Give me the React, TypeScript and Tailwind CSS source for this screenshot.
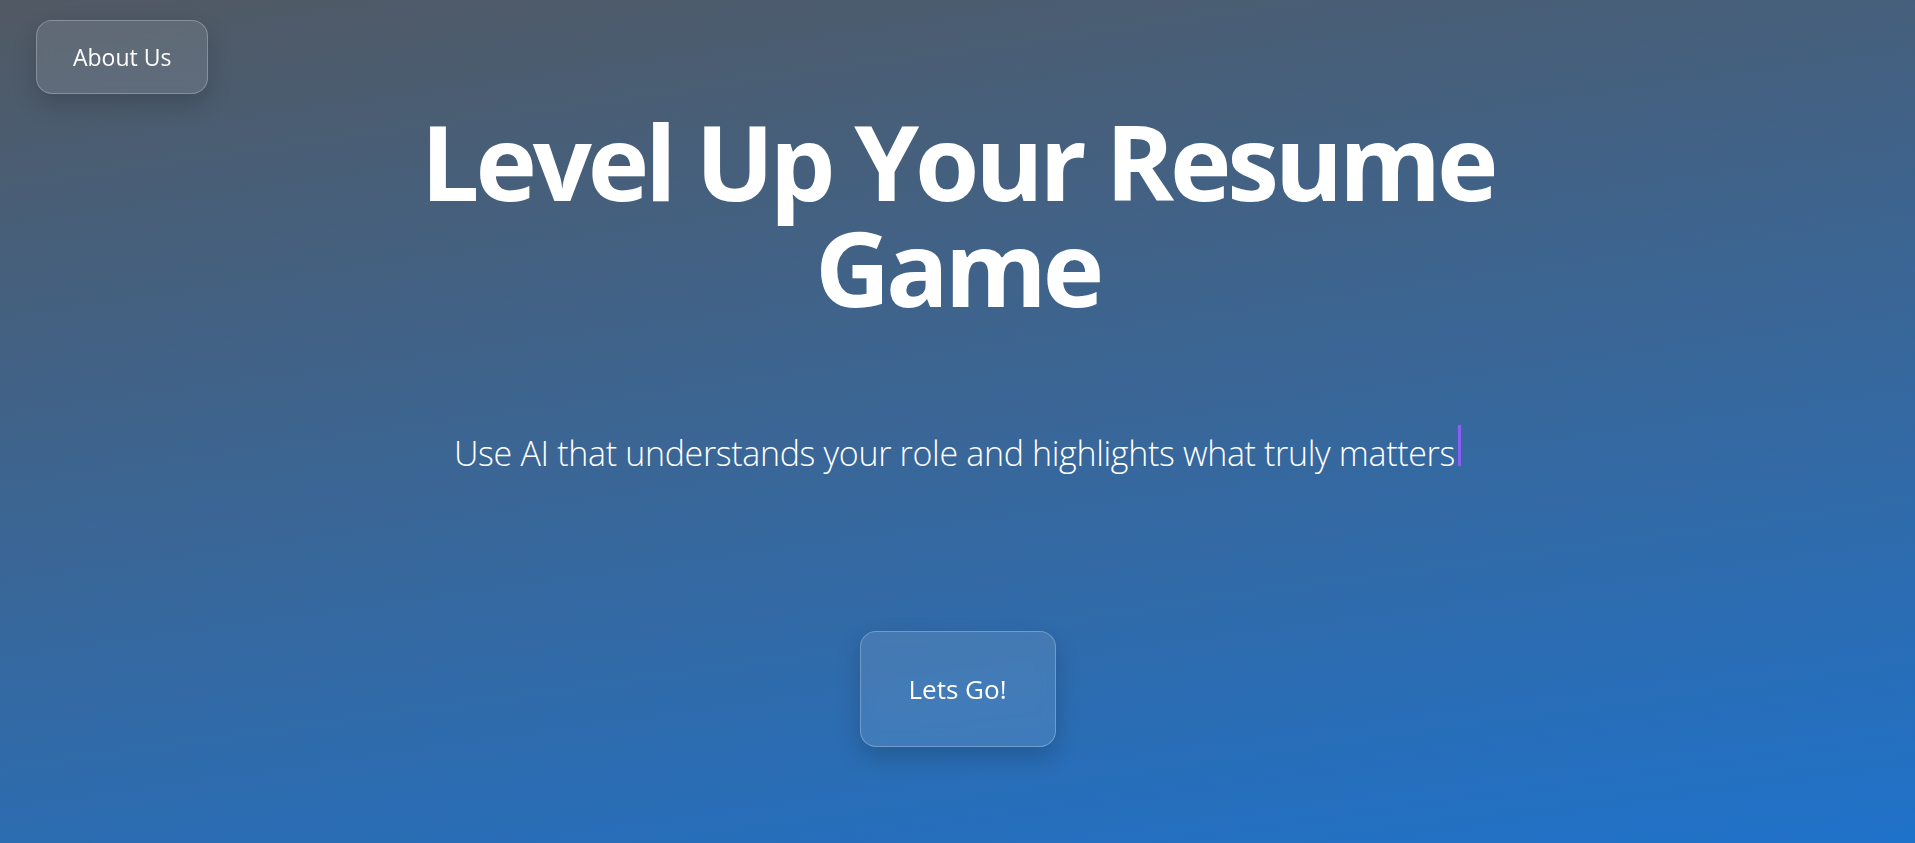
import React from "react";

const font = { fontFamily: '"Open Sans", "Noto Sans", sans-serif' };

function GlassButton({ label, className }: { label: string; className: string }) {
  return (
    <button
      type="button"
      className={`rounded-2xl border border-white/25 bg-white/10 text-white shadow-[0_10px_24px_rgba(0,0,0,0.18)] backdrop-blur-sm ${className}`}
    >
      {label}
    </button>
  );
}

export default function App() {
  return (
    <div
      style={font}
      className="flex min-h-screen w-full flex-col bg-[#4f5864] bg-linear-[172deg] from-[#515963] from-0% via-[#3a6696] via-50% to-[#1f72ca] to-100%"
    >
      <header className="pl-9 pt-5">
        <GlassButton label="About Us" className="px-9 py-5 text-[23px] leading-8" />
      </header>

      <main className="flex flex-col items-center">
        <h1 className="mt-[14px] text-center text-[104px] font-bold leading-[106px] tracking-[-0.04em] text-white">
          Level Up Your Resume
          <br />
          Game
        </h1>

        <p className="mt-[105px] text-[34px] font-light leading-10 tracking-[-0.01em] text-white">
          Use AI that understands your role and highlights what truly matters
          <span className="ml-[3px] inline-block h-[41px] w-[3px] bg-[#8b5cf6] align-baseline" />
        </p>

        <GlassButton label="Lets Go!" className="mt-[158px] px-12 py-10 text-[26px] leading-[34px]" />
      </main>
    </div>
  );
}
